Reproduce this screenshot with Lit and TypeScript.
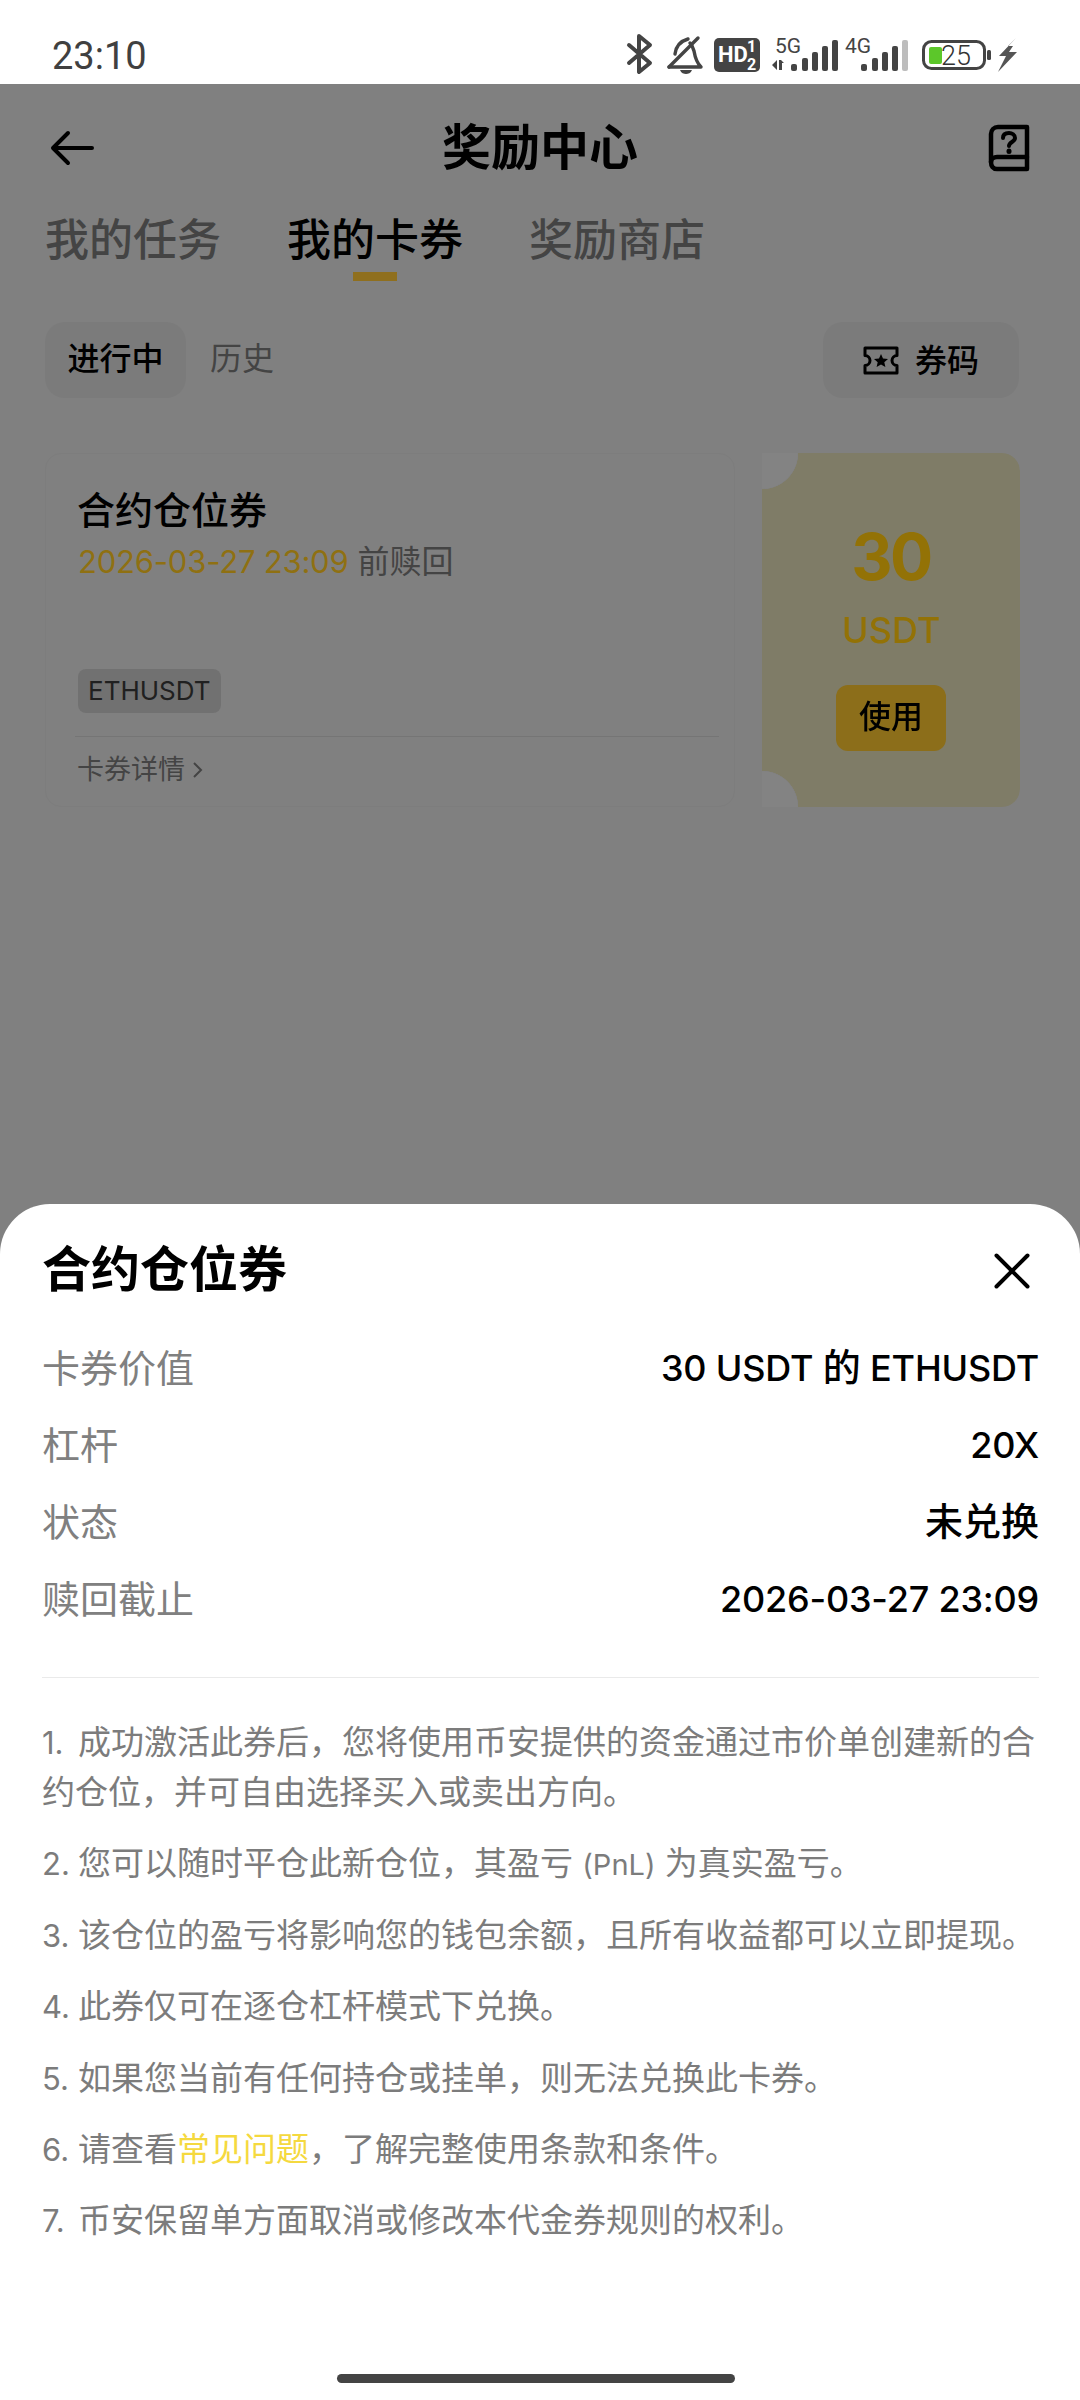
import { LitElement, html, css, svg } from "lit";
import { customElement } from "lit/decorators.js";

const statusIcons = svg`
  <g fill="none" stroke="#444" stroke-width="4" stroke-linecap="round" stroke-linejoin="round">
    <path d="M629 45 L650 63 L639 72 V36 L650 45 L629 63"/>
  </g>
  <g fill="none" stroke="#444" stroke-width="3.4" stroke-linecap="round" stroke-linejoin="round">
    <path d="M698 38 L669 67"/>
    <path d="M669 67 H701 C696 62 695 57 694 51 C693 47 692 45 690 43"/>
    <path d="M675 54 C676 46 681 41 688 39"/>
  </g>
  <path d="M680 70 H692 C691 73 688 74 686 74 C684 74 681 73 680 70 Z" fill="#444"/>
  <rect x="714" y="38" width="46" height="34" rx="5" fill="#444"/>
  <text x="718" y="62" class="hd">HD</text>
  <text x="747" y="52" class="hd-s">1</text>
  <text x="747" y="70" class="hd-s">2</text>
  <text x="775" y="53" class="net">5G</text>
  <path d="M772 65 L777 60 V70 Z M779 60 H781 L784 63 H782 V70 H779 Z" fill="#444"/>
  <g fill="#444">
    <rect x="791" y="64" width="6" height="7" rx="2"/>
    <rect x="802" y="58" width="6" height="13" rx="2"/>
    <rect x="812" y="52" width="6" height="19" rx="2"/>
    <rect x="822" y="46" width="6" height="25" rx="2"/>
    <rect x="832" y="40" width="6" height="31" rx="2"/>
  </g>
  <text x="845" y="53" class="net">4G</text>
  <g fill="#444">
    <rect x="861" y="64" width="6" height="7" rx="2"/>
    <rect x="872" y="58" width="6" height="13" rx="2"/>
    <rect x="882" y="52" width="6" height="19" rx="2"/>
    <rect x="892" y="46" width="6" height="25" rx="2"/>
  </g>
  <rect x="902" y="40" width="6" height="31" rx="2" fill="#bdbdbd"/>
  <rect x="923.5" y="41.5" width="61" height="27" rx="8" fill="none" stroke="#444" stroke-width="3"/>
  <rect x="929" y="47" width="13" height="17" rx="2" fill="#5cc72a"/>
  <text x="941" y="65" class="batt">25</text>
  <rect x="987" y="50" width="4" height="10" rx="1.5" fill="#444"/>
  <path d="M1016 38 L999 56 H1006 L998 72 L1017 52 H1009 L1013 46 H1008 Z" fill="#555"/>
`;

const rules = [
  html`<span class="n">1.</span>成功激活此券后，您将使用币安提供的资金通过市价单创建新的合<br /><span>约仓位，并可自由选择买入或卖出方向。</span>`,
  html`<span class="n">2.</span>您可以随时平仓此新仓位，其盈亏 <span class="pnl">(PnL)</span> 为真实盈亏。`,
  html`<span class="n">3.</span>该仓位的盈亏将影响您的钱包余额，且所有收益都可以立即提现。`,
  html`<span class="n">4.</span>此券仅可在逐仓杠杆模式下兑换。`,
  html`<span class="n">5.</span>如果您当前有任何持仓或挂单，则无法兑换此卡券。`,
  html`<span class="n">6.</span>请查看<span class="link">常见问题</span>，了解完整使用条款和条件。`,
  html`<span class="n">7.</span>币安保留单方面取消或修改本代金券规则的权利。`,
];

const details = [
  { k: "卡券价值", v: html`30 USDT <span class="cjk">的</span> ETHUSDT` },
  { k: "杠杆", v: html`20X` },
  { k: "状态", v: html`<span class="cjk">未兑换</span>` },
  { k: "赎回截止", v: html`2026-03-27 23:09` },
];

@customElement("app-root")
export class AppRoot extends LitElement {
  static styles = css`
    :host {
      display: block;
      width: 1080px;
      height: 2400px;
      font-family: "Inter", "Noto Sans CJK SC", sans-serif;
    }
    .screen {
      width: 1080px;
      height: 2400px;
      display: flex;
      flex-direction: column;
      background: #808080;
      overflow: hidden;
      color: #000;
    }
    .status {
      height: 84px;
      flex: none;
      background: #fff;
      display: flex;
      align-items: center;
      justify-content: space-between;
    }
    .time {
      font-family: "Roboto", sans-serif;
      font-size: 38px;
      font-weight: 400;
      color: #404040;
      margin-left: 52px;
      padding-top: 28px;
    }
    .status-icons {
      width: 480px;
      height: 84px;
      flex: none;
    }
    .hd { font: 700 22px "Roboto", sans-serif; fill: #fff; }
    .hd-s { font: 700 16px "Roboto", sans-serif; fill: #fff; }
    .net { font: 400 21px "Roboto", sans-serif; fill: #444; }
    .batt { font: 300 27px "Roboto", sans-serif; fill: #333; }

    .header {
      height: 128px;
      display: grid;
      grid-template-columns: 1fr auto 1fr;
      align-items: center;
      padding: 0 50px;
    }
    .header .title {
      font-size: 49px;
      font-weight: 700;
      line-height: 60px;
    }
    .header svg { display: block; }
    .help { justify-self: end; }
    .tabs {
      display: flex;
      gap: 66px;
      padding-left: 45px;
    }
    .tab {
      display: flex;
      flex-direction: column;
      align-items: center;
      font-size: 44px;
      line-height: 56px;
      font-weight: 500;
      color: #444;
      width: 176px;
    }
    .tab.on { color: #000; }
    .bar {
      width: 44px;
      height: 9px;
      margin-top: 4px;
      background: #8f6f1e;
    }
    .tab:not(.on) .bar { background: transparent; }
    .filters {
      display: flex;
      align-items: center;
      margin-top: 41px;
      padding: 0 61px 0 45px;
      font-size: 32px;
    }
    .pill {
      width: 141px;
      height: 76px;
      box-sizing: border-box;
      padding-bottom: 8px;
      border-radius: 20px;
      background: #7b7b7b;
      display: flex;
      align-items: center;
      justify-content: center;
      font-weight: 500;
    }
    .hist { margin-left: 24px; padding-bottom: 8px; color: #444; flex: 1; }
    .code {
      width: 196px;
      height: 76px;
      box-sizing: border-box;
      padding-bottom: 4px;
      border-radius: 20px;
      background: #7b7b7b;
      display: flex;
      align-items: center;
      justify-content: center;
      gap: 16px;
      font-weight: 500;
    }
    .code svg { margin-top: 4px; }
    .card {
      display: flex;
      gap: 27px;
      height: 354px;
      margin: 55px 60px 0 45px;
    }
    .info {
      width: 690px;
      box-sizing: border-box;
      padding: 32px 15px 0 32px;
      border: 1px solid #7d7d7d;
      border-radius: 16px;
    }
    .info h3 {
      margin: 0 0 0 -1px;
      font-size: 38px;
      line-height: 48px;
      font-weight: 500;
    }
    .date {
      margin-top: 6px;
      font-size: 32px;
      line-height: 44px;
      color: #444;
      white-space: nowrap;
    }
    .date b {
      font-size: 31px;
      letter-spacing: -0.2px;
      font-weight: 400;
      color: #8f7012;
    }
    .tag {
      display: inline-block;
      margin-top: 85px;
      height: 44px;
      line-height: 44px;
      padding: 0 10px;
      border-radius: 8px;
      background: #717171;
      color: #202020;
      font-size: 26px;
    }
    .rule {
      margin-top: 23px;
      margin-left: -3px;
      height: 1px;
      background: #757575;
    }
    .more {
      margin: 16px 0 0 -1px;
      display: flex;
      align-items: center;
      gap: 8px;
      font-size: 27px;
      line-height: 34px;
      color: #444;
    }
    .ticket-wrap {
      width: 258px;
      flex: none;
      background:
        radial-gradient(circle 36px at 0 0, #838383 98%, transparent) top left / 60px 60px no-repeat,
        radial-gradient(circle 36px at 0 100%, #838383 98%, transparent) bottom left / 60px 60px no-repeat;
    }
    .ticket {
      height: 100%;
      box-sizing: border-box;
      padding-top: 68px;
      display: flex;
      flex-direction: column;
      align-items: center;
      background: #7f7c67;
      border-radius: 0 18px 18px 0;
      -webkit-mask:
        radial-gradient(circle at 0 0, transparent 36px, #000 36.5px) top / 100% 50% no-repeat,
        radial-gradient(circle at 0 100%, transparent 36px, #000 36.5px) bottom / 100% 50% no-repeat;
      mask:
        radial-gradient(circle at 0 0, transparent 36px, #000 36.5px) top / 100% 50% no-repeat,
        radial-gradient(circle at 0 100%, transparent 36px, #000 36.5px) bottom / 100% 50% no-repeat;
    }
    .amount {
      font-size: 64px;
      line-height: 72px;
      font-weight: 700;
      letter-spacing: -2.5px;
      color: #937206;
    }
    .unit {
      margin-top: 15px;
      font-size: 36px;
      line-height: 44px;
      font-weight: 500;
      color: #937206;
    }
    .use {
      margin-top: 33px;
      width: 110px;
      height: 66px;
      box-sizing: border-box;
      padding-bottom: 8px;
      border-radius: 12px;
      background: #8c6e1a;
      display: flex;
      align-items: center;
      justify-content: center;
      font-size: 32px;
      font-weight: 500;
    }

    .sheet {
      margin-top: auto;
      height: 1196px;
      flex: none;
      box-sizing: border-box;
      background: #fff;
      border-radius: 50px 50px 0 0;
      padding: 38px 41px 17px 42px;
      display: flex;
      flex-direction: column;
    }
    .sheet-head {
      display: flex;
      align-items: center;
      justify-content: space-between;
      padding-right: 9px;
    }
    .sheet-head h2 {
      margin: 0;
      font-size: 49px;
      line-height: 56px;
      font-weight: 700;
    }
    .sheet-head svg { margin-top: 2px; }
    .rows {
      margin-top: 45px;
      display: flex;
      flex-direction: column;
      gap: 27px;
    }
    .row {
      display: flex;
      justify-content: space-between;
      height: 50px;
      line-height: 50px;
    }
    .row .k { font-size: 38px; color: #808080; }
    .row .v { font-size: 36px; font-weight: 500; letter-spacing: -0.2px; }
    .row .cjk { font-size: 38px; letter-spacing: 0; line-height: 1; }
    .sep {
      margin-top: 53px;
      height: 1px;
      background: #eaeaea;
    }
    .notes {
      margin-top: 39px;
      display: flex;
      flex-direction: column;
      gap: 21.4px;
      font-size: 33px;
      line-height: 50px;
      color: #7c7c7c;
    }
    .notes p { margin: 0; }
    .n { display: inline-block; width: 36px; font-size: 31px; line-height: 1; }
    .pnl { font-size: 29px; line-height: 1; }
    .link { color: #f5d93f; }
    .home {
      margin: auto 0 0 295px;
      width: 398px;
      height: 9px;
      border-radius: 5px;
      background: #444;
    }
  `;

  render() {
    return html`
      <div class="screen">
        <div class="status">
          <span class="time">23:10</span>
          <svg class="status-icons" viewBox="600 0 480 84">${statusIcons}</svg>
        </div>

        <div class="header">
          <svg width="44" height="36" viewBox="0 0 44 36" fill="none" stroke="#000" stroke-width="4" stroke-linecap="round" stroke-linejoin="round">
            <path d="M42 18 H4 M18 3 L3 18 L18 33"/>
          </svg>
          <span class="title">奖励中心</span>
          <svg class="help" width="42" height="48" viewBox="0 0 42 48" fill="none" stroke="#000" stroke-width="4.5" stroke-linejoin="round" stroke-linecap="round">
            <path d="M10 3 H39 V45 H9 C5 45 3 42 3 38 V10 C3 6 6 3 10 3 Z"/>
            <path d="M3 38 C3 35 6 33 9 33 H39"/>
            <path d="M15 14 C15 10 18 9 21 9 C24 9 27 11 27 14 C27 18 21 18 21 22" stroke-width="4"/>
            <path d="M21 27 V27.5" stroke-width="5"/>
          </svg>
        </div>

        <div class="tabs">
          <div class="tab">我的任务<i class="bar"></i></div>
          <div class="tab on">我的卡券<i class="bar"></i></div>
          <div class="tab">奖励商店<i class="bar"></i></div>
        </div>

        <div class="filters">
          <div class="pill">进行中</div>
          <div class="hist">历史</div>
          <div class="code">
            <svg width="36" height="29" viewBox="0 0 36 29" fill="none" stroke="#000" stroke-width="3" stroke-linejoin="round">
              <path d="M2 2 H34 V9.5 A5 5 0 0 0 34 19.5 V27 H2 V19.5 A5 5 0 0 0 2 9.5 Z"/>
              <path d="M18 8 L20 12.4 L25 13 L21.3 16.2 L22.4 21 L18 18.5 L13.6 21 L14.7 16.2 L11 13 L16 12.4 Z" fill="#000" stroke="none"/>
            </svg>
            券码
          </div>
        </div>

        <div class="card">
          <div class="info">
            <h3>合约仓位券</h3>
            <div class="date"><b>2026-03-27 23:09</b> 前赎回</div>
            <span class="tag">ETHUSDT</span>
            <div class="rule"></div>
            <div class="more">
              卡券详情
              <svg width="10" height="20" viewBox="0 0 10 20" fill="none" stroke="#444" stroke-width="2"><path d="M1 3 L8 10 L1 17"/></svg>
            </div>
          </div>
          <div class="ticket-wrap">
            <div class="ticket">
              <div class="amount">30</div>
              <div class="unit">USDT</div>
              <div class="use">使用</div>
            </div>
          </div>
        </div>

        <div class="sheet">
          <div class="sheet-head">
            <h2>合约仓位券</h2>
            <svg width="36" height="36" viewBox="0 0 36 36" fill="none" stroke="#000" stroke-width="4" stroke-linecap="round">
              <path d="M2.5 2.5 L33.5 33.5 M33.5 2.5 L2.5 33.5"/>
            </svg>
          </div>
          <div class="rows">
            ${details.map((d) => html`<div class="row"><span class="k">${d.k}</span><span class="v">${d.v}</span></div>`)}
          </div>
          <div class="sep"></div>
          <div class="notes">${rules.map((r) => html`<p>${r}</p>`)}</div>
          <div class="home"></div>
        </div>
      </div>
    `;
  }
}
